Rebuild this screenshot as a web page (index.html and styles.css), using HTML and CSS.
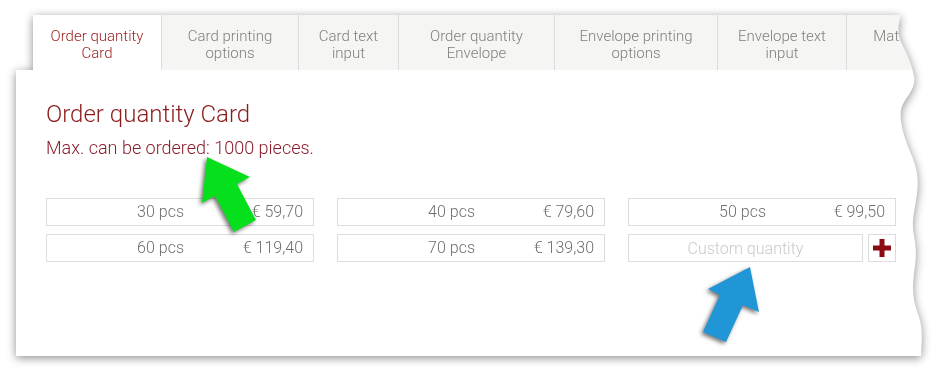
FILE: index.html
```html
<!DOCTYPE html>
<html lang="en">
<head>
  <meta charset="UTF-8" />
  <title>Order quantity Card</title>
  <link rel="stylesheet" href="styles.css">
</head>
<body>
  <div class="sheet">
    <div class="paper">
      <ul class="tabs">
        <li class="tab active">Order quantity<br>Card</li>
        <li class="tab">Card printing<br>options</li>
        <li class="tab">Card text<br>input</li>
        <li class="tab">Order quantity<br>Envelope</li>
        <li class="tab">Envelope printing<br>options</li>
        <li class="tab">Envelope text<br>input</li>
        <li class="tab">Matching items</li>
      </ul>

      <div class="panel">
        <h1 class="title">Order quantity Card</h1>
        <p class="note">Max. can be ordered: 1000 pieces.</p>

        <div class="options">
          <div class="option"><span class="qty">30 pcs</span><span class="price">€ 59,70</span></div>
          <div class="option"><span class="qty">40 pcs</span><span class="price">€ 79,60</span></div>
          <div class="option"><span class="qty">50 pcs</span><span class="price">€ 99,50</span></div>
          <div class="option"><span class="qty">60 pcs</span><span class="price">€ 119,40</span></div>
          <div class="option"><span class="qty">70 pcs</span><span class="price">€ 139,30</span></div>
          <div class="custom">
            <input type="text" placeholder="Custom quantity">
            <button class="add" type="button">
              <svg width="18" height="18" viewBox="0 0 18 18"><path d="M6.5 0h5v6.5H18v5h-6.5V18h-5v-6.5H0v-5h6.5z" fill="#8b0b14"/></svg>
            </button>
          </div>
        </div>
      </div>
    </div>
  </div>

  <!-- annotation arrows -->
  <svg class="marks" width="937" height="372" viewBox="0 0 937 372">
    <polygon class="arrow-green" points="207,157 250,177 237,184 256,220 234,232 215,196 202,203"/>
    <polygon class="arrow-blue" points="750,267 759,312 743,305 726,342 703,332 720,295 708,289"/>
  </svg>
</body>
</html>
```

FILE: styles.css
```css
* {
  margin: 0;
  padding: 0;
  box-sizing: border-box;
}
html, body {
  width: 937px;
  height: 372px;
  overflow: hidden;
}
body {
  background: #fff;
  font-family: Roboto, 'Liberation Sans', sans-serif;
  font-weight: 300;
  position: relative;
}

/* torn paper */
.sheet {
  filter: drop-shadow(0 2px 5px rgba(0, 0, 0, 0.45));
}
.paper {
  width: 937px;
  height: 372px;
  padding-top: 15px;
  clip-path: path('M33,15 L901,15 C898,24 897,34 902,44 S911,62 914,76 S903,98 901,110 S905,140 911,154 S919,178 917,194 S911,220 914,236 S916,258 914,274 S913,300 918,314 S922,336 921,356 L16,356 L16,70 L33,70 Z');
}

.tabs {
  display: flex;
  list-style: none;
  margin-left: 33px;
  height: 55px;
  background: #f5f5f3;
}
.tab {
  flex-shrink: 0;
  padding-top: 13px;
  text-align: center;
  font-size: 15px;
  line-height: 17px;
  color: #7f7f7f;
  border-right: 1px solid #dcdcdc;
  white-space: nowrap;
}
.tab:nth-child(1) { width: 129px; }
.tab:nth-child(2) { width: 137px; }
.tab:nth-child(3) { width: 100px; }
.tab:nth-child(4) { width: 156px; }
.tab:nth-child(5) { width: 163px; }
.tab:nth-child(6) { width: 129px; }
.tab:nth-child(7) { width: 155px; border-right: none; }
.tab.active {
  background: #fff;
  color: #9b1c1c;
}

.panel {
  margin-left: 16px;
  width: 921px;
  height: 286px;
  background: #fff;
  padding: 30px 0 0 30px;
}
.title {
  font-size: 24px;
  line-height: 28px;
  font-weight: 300;
  color: #8c1c1c;
}
.note {
  margin-top: 9px;
  font-size: 18px;
  line-height: 22px;
  color: #8b1d2c;
}

.options {
  display: grid;
  grid-template-columns: repeat(3, 268px);
  column-gap: 23px;
  row-gap: 8px;
  margin-top: 39px;
}
.option {
  display: flex;
  height: 28px;
  border: 1px solid #dcdcdc;
  font-size: 16px;
  line-height: 26px;
  color: #6e6e6e;
}
.qty {
  width: 137px;
  text-align: right;
}
.price {
  flex: 1;
  text-align: right;
  padding-right: 10px;
}

.custom {
  display: flex;
  gap: 5px;
}
.custom input {
  flex: 1;
  min-width: 0;
  height: 28px;
  border: 1px solid #dcdcdc;
  font-family: inherit;
  font-weight: 300;
  font-size: 16px;
  color: #6e6e6e;
  text-align: center;
  outline: none;
}
.custom input::placeholder {
  color: #c9c9c9;
}
.add {
  width: 28px;
  height: 28px;
  border: 1px solid #dcdcdc;
  background: #fff;
  display: flex;
  align-items: center;
  justify-content: center;
}

.marks {
  position: absolute;
  top: 0;
  left: 0;
  pointer-events: none;
  filter: drop-shadow(-2px 2px 2px rgba(0, 0, 0, 0.55));
}
.arrow-green { fill: #06e01c; }
.arrow-blue { fill: #2196d6; }
```
